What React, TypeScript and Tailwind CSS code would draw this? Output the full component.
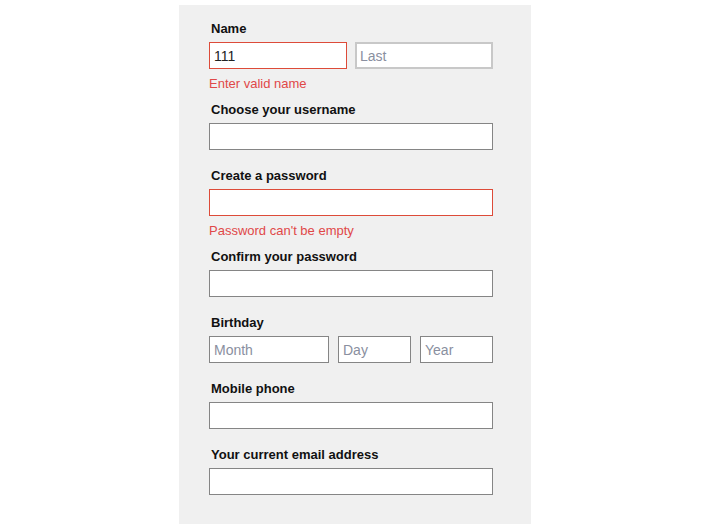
const labelCls = "block text-[13px] leading-4 font-bold text-[#111] mb-[5px] pl-0.5";
const inputCls =
  "block h-[27px] w-full bg-white border border-[#858585] px-1 text-[14px] text-[#222] placeholder:text-[#8a8fa0] outline-none";
const errorCls = "text-[13px] leading-4 text-[#e04848] mt-[7px] mb-[10px]";

function Field({ label, type = "text" }: { label: string; type?: string }) {
  return (
    <div className="mb-[18px]">
      <label className={labelCls}>{label}</label>
      <input type={type} className={inputCls} />
    </div>
  );
}

export default function App() {
  return (
    <div className="h-[524px] overflow-hidden bg-white flex items-start pl-[179px] pt-[5px] font-['Liberation_Sans',Arial,sans-serif]">
      <form className="w-[352px] bg-[#f0f0f0] pl-[30px] pr-[38px] pt-[16px] pb-10">
        <div>
          <label className={labelCls}>Name</label>
          <div className="flex gap-2">
            <input
              defaultValue="111"
              className="block h-[27px] w-[138px] bg-white border border-[#dd4b39] px-1 text-[14px] text-[#222] outline-none"
            />
            <input
              placeholder="Last"
              className="block h-[27px] w-[138px] bg-white border-2 border-[#c8c8c8] px-[3px] text-[14px] placeholder:text-[#8a8fa0] outline-none"
            />
          </div>
          <p className={errorCls}>Enter valid name</p>
        </div>
        <Field label="Choose your username" />
        <div>
          <label className={labelCls}>Create a password</label>
          <input
            type="password"
            className="block h-[27px] w-full bg-white border border-[#dd4b39] px-1 text-[14px] outline-none"
          />
          <p className={errorCls}>Password can't be empty</p>
        </div>
        <Field label="Confirm your password" type="password" />
        <div className="mb-[18px]">
          <label className={labelCls}>Birthday</label>
          <div className="flex gap-[9px]">
            <input placeholder="Month" className={inputCls + " !w-[120px]"} />
            <input placeholder="Day" className={inputCls + " !w-[73px]"} />
            <input placeholder="Year" className={inputCls + " !w-[73px]"} />
          </div>
        </div>
        <Field label="Mobile phone" />
        <Field label="Your current email address" />
      </form>
    </div>
  );
}
